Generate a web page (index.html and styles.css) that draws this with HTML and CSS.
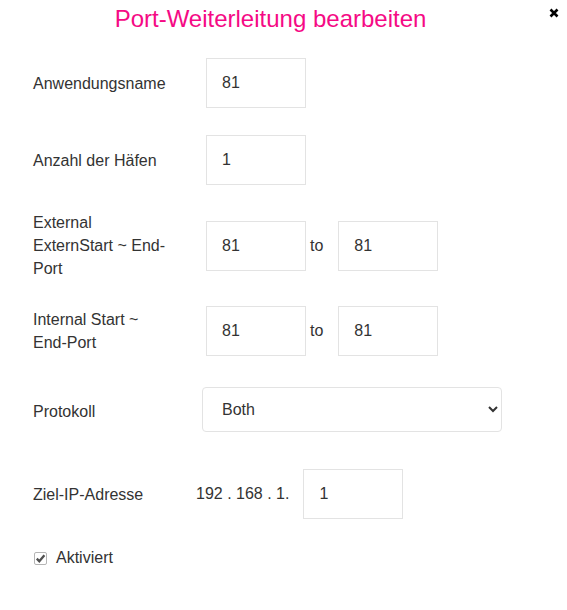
FILE: index.html
```html
<!DOCTYPE html>
<html lang="de">
<head>
<meta charset="utf-8">
<title>Port-Weiterleitung bearbeiten</title>
<link rel="stylesheet" href="styles.css">
</head>
<body>
<div class="dialog">
  <header class="dialog-head">
    <h1 class="title">Port-Weiterleitung bearbeiten</h1>
    <button class="close" type="button" aria-label="Schließen">
      <svg width="10" height="10" viewBox="0 0 10 10"><path d="M1.5 1.5 L8.5 8.5 M8.5 1.5 L1.5 8.5" stroke="#000" stroke-width="2.6" stroke-linecap="butt"/></svg>
    </button>
  </header>
  <form class="form">
    <div class="row r1">
      <label class="label">Anwendungsname</label>
      <div class="field"><input class="box" type="text" value="81"></div>
    </div>
    <div class="row r2">
      <label class="label">Anzahl der Häfen</label>
      <div class="field"><input class="box" type="text" value="1"></div>
    </div>
    <div class="row r3">
      <label class="label">External ExternStart ~ End-Port</label>
      <div class="field"><input class="box" type="text" value="81"><span class="to">to</span><input class="box" type="text" value="81"></div>
    </div>
    <div class="row r4">
      <label class="label">Internal Start ~ End-Port</label>
      <div class="field"><input class="box" type="text" value="81"><span class="to">to</span><input class="box" type="text" value="81"></div>
    </div>
    <div class="row r5">
      <label class="label">Protokoll</label>
      <div class="field sel-field"><select class="select"><option>Both</option><option>TCP</option><option>UDP</option></select></div>
    </div>
    <div class="row r6">
      <label class="label">Ziel-IP-Adresse</label>
      <div class="field ip-field"><span class="ip">192 . 168 . 1.</span><input class="box" type="text" value="1"></div>
    </div>
    <label class="check-row">
      <span class="check" role="checkbox" aria-checked="true">
        <svg width="11" height="11" viewBox="0 0 11 11"><path d="M1.8 5.6 L4.3 8.2 L9.4 2.2" fill="none" stroke="#505050" stroke-width="2.3"/></svg>
      </span>
      <span class="check-label">Aktiviert</span>
    </label>
  </form>
</div>
</body>
</html>
```
FILE: styles.css
```css
html, body {
  margin: 0;
  padding: 0;
  background: #fff;
}
body {
  font-family: Arial, "Liberation Sans", sans-serif;
  color: #333;
  font-size: 16px;
}
.dialog {
  width: 567px;
  height: 610px;
  box-sizing: border-box;
  position: relative;
}
.dialog-head {
  height: 40px;
  display: flex;
  justify-content: center;
}
.title {
  margin: 4px 26px 0 0;
  font-weight: normal;
  font-size: 24px;
  line-height: 30px;
  color: #f50a85;
}
.close {
  position: absolute;
  top: 6px;
  right: 6px;
  width: 14px;
  height: 14px;
  padding: 0;
  border: 0;
  background: transparent;
  display: flex;
  align-items: center;
  justify-content: center;
}
.form {
  padding-left: 33px;
}
.row {
  display: flex;
  align-items: center;
}
.r1 { margin-top: 18px; }
.r2 { margin-top: 27px; }
.r3 { margin-top: 26px; }
.r4 { margin-top: 26px; }
.r5 { margin-top: 31px; align-items: flex-start; height: 50px; }
.r6 { margin-top: 32px; }
.label {
  width: 140px;
  line-height: 23px;
  color: #333;
}
.field {
  margin-left: 33px;
  display: flex;
  align-items: center;
}
.box {
  width: 100px;
  height: 50px;
  box-sizing: border-box;
  border: 1px solid #e3e3e3;
  border-radius: 0;
  padding: 0 0 0 15px;
  font-family: Arial, "Liberation Sans", sans-serif;
  font-size: 16px;
  color: #333;
  outline: none;
  background: #fff;
}
.to {
  margin: 0 15px 0 4px;
}
.sel-field {
  margin-left: 29px;
}
.r5 .label {
  margin-top: 13px;
}
.select {
  width: 300px;
  height: 45px;
  box-sizing: border-box;
  border: 1px solid #e3e3e3;
  border-radius: 4px;
  padding: 0 0 0 15px;
  font-family: Arial, "Liberation Sans", sans-serif;
  font-size: 16px;
  color: #333;
  background: #fff;
}
.ip-field {
  margin-left: 23px;
}
.ip {
  margin-right: 14px;
}
.check-row {
  margin-top: 30px;
  display: flex;
  align-items: center;
}
.check {
  margin: 0 9px 0 1px;
  width: 13px;
  height: 13px;
  box-sizing: border-box;
  border: 1px solid #b5b5b5;
  border-radius: 2px;
  background: #fff;
  display: flex;
  align-items: center;
  justify-content: center;
}
.check-label {
  color: #333;
}
```
